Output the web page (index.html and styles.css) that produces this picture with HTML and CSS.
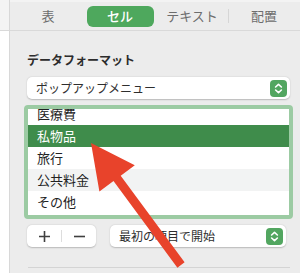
FILE: index.html
```html
<!DOCTYPE html>
<html lang="ja">
<head>
<meta charset="utf-8">
<link rel="stylesheet" href="styles.css">
</head>
<body>
<div class="window">
  <div class="gutter">
    <div class="gutter-top"></div>
    <div class="gutter-bottom"></div>
  </div>
  <div class="sidebar">
    <div class="tabs">
      <div class="tab">表</div>
      <div class="tab"><span class="pill">セル</span></div>
      <div class="tab">テキスト</div>
      <div class="tab-sep"></div>
      <div class="tab">配置</div>
    </div>
    <div class="panel">
      <div class="heading">データフォーマット</div>
      <div class="popup">
        <span class="popup-label">ポップアップメニュー</span>
        <span class="stepper"><svg width="17" height="17" viewBox="0 0 17 17"><polyline points="5.6,7 8.5,4.3 11.4,7" fill="none" stroke="#fff" stroke-width="1.6" stroke-linecap="round" stroke-linejoin="round"/><polyline points="5.6,10 8.5,12.7 11.4,10" fill="none" stroke="#fff" stroke-width="1.6" stroke-linecap="round" stroke-linejoin="round"/></svg></span>
      </div>
      <div class="list">
        <div class="list-inner">
          <div class="row">医療費</div>
          <div class="row selected">私物品</div>
          <div class="row">旅行</div>
          <div class="row stripe">公共料金</div>
          <div class="row">その他</div>
        </div>
      </div>
      <div class="controls">
        <div class="segmented">
          <span class="seg"><svg width="13" height="13" viewBox="0 0 13 13"><path d="M6.5 1 V12 M1 6.5 H12" stroke="#3f3f3f" stroke-width="1.6"/></svg></span>
          <span class="seg-sep"></span>
          <span class="seg"><svg width="13" height="13" viewBox="0 0 13 13"><path d="M1 6.5 H12" stroke="#3f3f3f" stroke-width="1.6"/></svg></span>
        </div>
        <div class="popup popup-small">
          <span class="popup-label">最初の項目で開始</span>
          <span class="stepper"><svg width="17" height="17" viewBox="0 0 17 17"><polyline points="5.6,7 8.5,4.3 11.4,7" fill="none" stroke="#fff" stroke-width="1.6" stroke-linecap="round" stroke-linejoin="round"/><polyline points="5.6,10 8.5,12.7 11.4,10" fill="none" stroke="#fff" stroke-width="1.6" stroke-linecap="round" stroke-linejoin="round"/></svg></span>
        </div>
      </div>
      <div class="divider"></div>
    </div>
  </div>
</div>
<svg class="arrow" width="300" height="273" viewBox="0 0 300 273">
  <polygon points="91,143 134.8,165.3 120.7,175.7 184.6,262.3 177.4,267.7 113.5,181.1 99.4,191.5" fill="#e8432b"/>
</svg>
</body>
</html>
```

FILE: styles.css
```css
html, body {
  margin: 0;
  padding: 0;
}
body {
  width: 300px;
  height: 273px;
  overflow: hidden;
  background: #ececec;
  font-family: "Noto Sans CJK JP", "Noto Sans", sans-serif;
  position: relative;
}
.window {
  display: flex;
  height: 273px;
}
.gutter {
  width: 11px;
  border-right: 1px solid #d8d8d8;
  display: flex;
  flex-direction: column;
}
.gutter-top {
  height: 30px;
  background: #f4f4f4;
  border-bottom: 1px solid #d9d9d9;
}
.gutter-bottom {
  flex: 1;
  background: #ffffff;
}
.sidebar {
  flex: 1;
  display: flex;
  flex-direction: column;
}
.tabs {
  height: 28px;
  border-top: 2px solid #f3f3f3;
  border-bottom: 1px solid #d9d9d9;
  display: flex;
  align-items: center;
  padding-left: 2px;
}
.tab {
  width: 72px;
  display: flex;
  justify-content: center;
  align-items: center;
  font-size: 13px;
  color: #6d6d6d;
  line-height: 18px;
}
.tab-sep {
  width: 1px;
  height: 14px;
  background: #d6d6d6;
  margin: 0 -1px 0 0;
}
.pill {
  width: 67px;
  height: 21px;
  border-radius: 6px;
  background: #4ea85d;
  color: #ffffff;
  font-weight: 500;
  display: flex;
  justify-content: center;
  align-items: center;
}
.panel {
  padding: 0 10px 0 17px;
  display: flex;
  flex-direction: column;
}
.heading {
  margin-top: 21px;
  font-size: 12px;
  line-height: 16px;
  font-weight: 700;
  color: #2c2c2c;
}
.popup {
  margin-top: 9px;
  height: 22px;
  background: #ffffff;
  border-radius: 5px;
  box-shadow: 0 0.5px 1.5px rgba(0, 0, 0, 0.22);
  display: flex;
  align-items: center;
  justify-content: space-between;
  padding: 0 3px 0 9px;
}
.popup-label {
  font-size: 12px;
  color: #2e2e2e;
  line-height: 16px;
}
.stepper {
  width: 17px;
  height: 17px;
  border-radius: 4px;
  background: #52a660;
  display: flex;
}
.list {
  margin: 6px -3px 0 -3px;
  height: 106px;
  border: 4px solid #9ccba3;
  border-radius: 4px;
  background: #ffffff;
  overflow: hidden;
}
.list-inner {
  margin-top: -6px;
}
.row {
  height: 22px;
  line-height: 22px;
  font-size: 13px;
  color: #222222;
  padding-left: 9px;
}
.row.selected {
  background: #3f8c4b;
  color: #ffffff;
}
.row.stripe {
  background: #f2f3f3;
}
.controls {
  margin-top: 6px;
  display: flex;
  gap: 14px;
  height: 22px;
}
.segmented {
  width: 69px;
  height: 22px;
  background: #ffffff;
  border-radius: 5px;
  box-shadow: 0 0.5px 1.5px rgba(0, 0, 0, 0.22);
  display: flex;
  align-items: center;
}
.seg {
  flex: 1;
  display: flex;
  justify-content: center;
  align-items: center;
}
.seg-sep {
  width: 1px;
  height: 12px;
  background: #dddddd;
}
.popup-small {
  margin-top: 0;
  flex: 1;
  margin-right: 4px;
}
.divider {
  margin-top: 20px;
  margin-left: 1px;
  height: 1px;
  background: #d4d4d4;
}
.arrow {
  position: absolute;
  left: 0;
  top: 0;
}
```
